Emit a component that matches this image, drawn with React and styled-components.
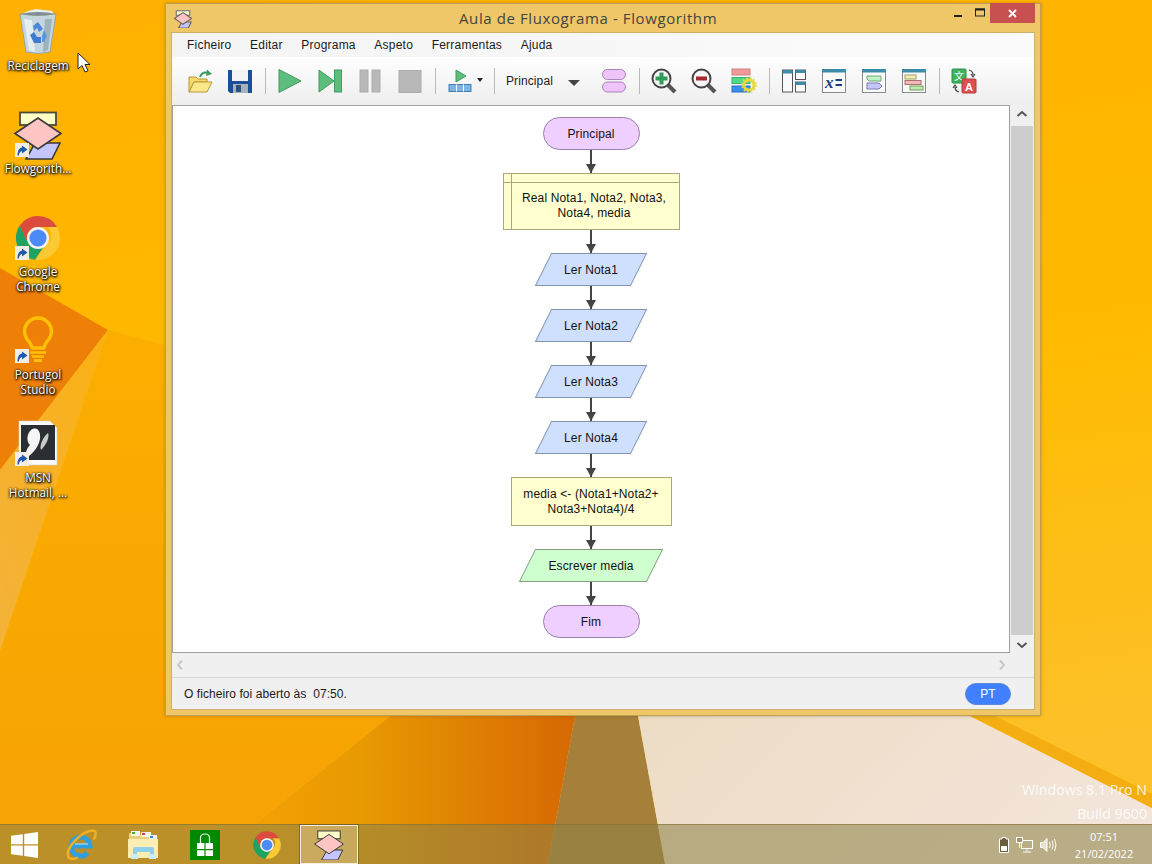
import React from 'react';
import styled, { createGlobalStyle } from 'styled-components';

const GlobalStyle = createGlobalStyle`
  html, body { margin: 0; padding: 0; }
  * { box-sizing: border-box; }
`;

const Screen = styled.div`
  position: relative;
  width: 1152px;
  height: 864px;
  overflow: hidden;
  display: flex;
  flex-direction: column;
  font-family: "Liberation Sans", Arial, sans-serif;
  font-size: 12px;
`;

const WallpaperSvg = styled.svg`
  position: absolute;
  inset: 0;
`;

const Desktop = styled.div`
  position: relative;
  flex: 1;
`;

const IconColumn = styled.div`
  display: flex;
  flex-direction: column;
  width: 76px;
  padding-top: 8px;
`;

const DesktopIcon = styled.div`
  display: flex;
  flex-direction: column;
  align-items: center;
  height: 103px;
`;

const IconBox = styled.div`
  position: relative;
  width: 48px;
  height: 48px;
  svg { display: block; overflow: visible; }
`;

const ShortcutBadge = styled.svg`
  position: absolute;
  left: 1px;
  bottom: 2px;
`;

const IconLabel = styled.div`
  margin-top: 2px;
  width: 76px;
  text-align: center;
  font-family: "Open Sans", sans-serif;
  font-size: 11.7px;
  line-height: 15px;
  color: #fff;
  text-shadow: 0 0 2px #000, 1px 1px 2px #000, 0 1px 3px #000;
  white-space: pre-line;
`;

const Pointer = styled.svg`
  position: absolute;
  left: 77px;
  top: 52px;
`;

const Watermark = styled.div`
  position: absolute;
  right: 5px;
  bottom: -2px;
  text-align: right;
  font-family: "Open Sans", sans-serif;
  font-size: 14.2px;
  line-height: 24px;
  color: rgba(255, 255, 255, 0.88);
`;

const Window = styled.div`
  position: absolute;
  left: 165px;
  top: 3px;
  width: 876px;
  height: 713px;
  display: flex;
  flex-direction: column;
  padding: 0 5px 5px;
  background: #efc768;
  border: 1px solid #c0a050;
  box-shadow: 0 0 3px rgba(90, 60, 0, 0.35);
`;

const TitleBar = styled.div`
  display: flex;
  height: 28px;
  flex: none;
`;

const TitleIcon = styled.svg`
  margin: 6px 0 0 3px;
`;

const TitleText = styled.div`
  margin-left: 267px;
  line-height: 28px;
  font-family: "Open Sans", sans-serif;
  font-size: 15px;
  letter-spacing: 0.6px;
  color: #444;
`;

const WindowButtons = styled.div`
  display: flex;
  margin-left: auto;
  height: 20px;
  margin-top: -1px;
`;

const WindowButton = styled.div`
  display: flex;
  align-items: center;
  justify-content: center;
  width: ${(p) => p.$w}px;
  background: ${(p) => (p.$close ? '#c75050' : 'transparent')};
`;

const Client = styled.div`
  flex: 1;
  display: flex;
  flex-direction: column;
  background: #f0f0f0;
  border: 1px solid #cdb06a;
  min-height: 0;
`;

const MenuBar = styled.div`
  display: flex;
  gap: 18.6px;
  height: 24px;
  flex: none;
  padding-left: 15px;
  background: linear-gradient(90deg, #f4f4f4, #fbfbfb);
  line-height: 24px;
  color: #1a1a1a;
`;

const MenuItem = styled.span`
  letter-spacing: 0.22px;
`;

const Toolbar = styled.div`
  display: flex;
  align-items: center;
  height: 48px;
  flex: none;
  padding-left: 8px;
  background: linear-gradient(#fefefe, #eeeeee);
`;

const ToolButton = styled.div`
  display: flex;
  align-items: center;
  justify-content: center;
  width: 40px;
  height: 30px;
`;

const RunButton = styled.div`
  position: relative;
  width: 49px;
  height: 30px;
  padding: 3px 0 0 8px;
  svg { display: block; }
`;

const RunArrow = styled.span`
  position: absolute;
  left: 37px;
  top: 12px;
  border: 3px solid transparent;
  border-top: 4px solid #222;
`;

const Separator = styled.div`
  width: 1px;
  height: 26px;
  margin: 0 4.5px;
  background: #b9b9b9;
`;

const FunctionCombo = styled.div`
  display: flex;
  align-items: center;
  width: 95px;
  padding-left: 7px;
  letter-spacing: 0.1px;
  color: #222;
`;

const ComboArrow = styled.span`
  margin: 3px 0 0 15px;
  border: 6px solid transparent;
  border-top: 6px solid #444;
  border-bottom: 0;
`;

const Workspace = styled.div`
  flex: none;
  display: grid;
  grid-template-columns: 1fr 24px;
  grid-template-rows: 548px 24px;
`;

const Canvas = styled.div`
  display: flex;
  flex-direction: column;
  align-items: center;
  padding-top: 11px;
  background: #fff;
  border: 1px solid #a0a0a0;
  color: #111;
`;

const VerticalScroll = styled.div`
  display: flex;
  flex-direction: column;
  align-items: center;
  padding: 3px 0 2px;
`;

const ScrollThumb = styled.div`
  width: 22px;
  flex: 1;
  margin: 6px 0 4px;
  background: #cdcdcd;
`;

const HorizontalScroll = styled.div`
  display: flex;
  align-items: center;
  justify-content: space-between;
  padding: 0 26px 0 2px;
  grid-column: 1 / span 2;
`;

const Chevron = styled.svg`
  display: block;
  flex: none;
`;

const StatusBar = styled.div`
  flex: 1;
  display: flex;
  align-items: center;
  justify-content: space-between;
  padding: 0 23px 0 12px;
  border-top: 1px solid #d8d8d8;
  letter-spacing: 0.07px;
  color: #1a1a1a;
  white-space: pre;
`;

const LangBadge = styled.div`
  width: 46px;
  height: 22px;
  border-radius: 11px;
  background: #4080ff;
  border: 1px solid #5f88d8;
  color: #fff;
  text-align: center;
  line-height: 20px;
`;

const Shape = styled.div`
  display: flex;
  align-items: center;
  justify-content: center;
  text-align: center;
  line-height: 15px;
  letter-spacing: 0.13px;
  flex: none;
`;

const Terminal = styled(Shape)`
  width: 97px;
  height: 33px;
  padding-top: 1px;
  border-radius: 17px;
  background: #efcfff;
  border: 1px solid #9a7fa6;
`;

const Declare = styled(Shape)`
  position: relative;
  width: 177px;
  height: 57px;
  padding: 8px 8px 0 14px;
  background: #ffffd0;
  border: 1px solid #a8a878;

  &::before {
    content: '';
    position: absolute;
    left: 0;
    right: 0;
    top: 8px;
    height: 1px;
    background: #a8a878;
  }

  &::after {
    content: '';
    position: absolute;
    left: 7px;
    top: 0;
    bottom: 0;
    width: 1px;
    background: #a8a878;
  }
`;

const Process = styled(Shape)`
  width: 161px;
  height: 49px;
  background: #ffffd0;
  border: 1px solid #a8a878;
`;

const Parallelogram = styled(Shape)`
  position: relative;
  width: ${(p) => p.$w}px;
  height: 33px;
  padding-top: 1px;

  &::before {
    content: '';
    position: absolute;
    inset: 0;
    transform: skewX(-26.5deg);
    background: ${(p) => p.$fill};
    border: 1px solid ${(p) => p.$line};
  }

  span { position: relative; }
`;

const Connector = styled.div`
  position: relative;
  flex: none;
  width: 2px;
  height: 23px;
  background: #444;

  &::after {
    content: '';
    position: absolute;
    left: -4px;
    bottom: 0;
    border-left: 5px solid transparent;
    border-right: 5px solid transparent;
    border-top: 9px solid #444;
  }
`;

const Taskbar = styled.div`
  position: relative;
  display: flex;
  align-items: center;
  height: 40px;
  flex: none;
  background: rgba(140, 130, 72, 0.56);
  border-top: 1px solid rgba(130, 110, 50, 0.6);
`;

const StartButton = styled.div`
  display: flex;
  align-items: center;
  justify-content: center;
  width: 50px;
  height: 100%;
  padding-right: 1px;
`;

const TaskItem = styled.div`
  display: flex;
  align-items: center;
  justify-content: center;
  width: 58px;
  height: 39px;
  margin: 0 2px;
  ${(p) => p.$active && `
    background: rgba(255, 255, 255, 0.25);
    border: 1px solid rgba(255, 255, 255, 0.8);
    box-shadow: 0 0 0 1px rgba(90, 70, 40, 0.5);
  `}
`;

const Tray = styled.div`
  display: flex;
  align-items: center;
  gap: 7px;
  margin-left: auto;
  padding-right: 8px;
`;

const Clock = styled.div`
  width: 80px;
  text-align: center;
  font-family: "Open Sans", sans-serif;
  font-size: 11px;
  line-height: 17px;
  color: #fff;
`;

/* ---- wallpaper ---- */

const Wallpaper = () => (
  <WallpaperSvg width="1152" height="864" viewBox="0 0 1152 864">
    <defs>
      <linearGradient id="base" x1="0" y1="0" x2="0.2" y2="1">
        <stop offset="0" stopColor="#ffb000" />
        <stop offset="0.55" stopColor="#ffbb00" />
        <stop offset="1" stopColor="#fcc028" />
      </linearGradient>
      <linearGradient id="lower" x1="0" y1="0" x2="0" y2="1">
        <stop offset="0" stopColor="#fcae00" />
        <stop offset="1" stopColor="#f6a204" />
      </linearGradient>
      <linearGradient id="ember" x1="0" y1="0" x2="1" y2="0">
        <stop offset="0" stopColor="#f6a404" />
        <stop offset="0.42" stopColor="#e89a02" />
        <stop offset="1" stopColor="#d66804" />
      </linearGradient>
      <linearGradient id="streak" x1="1" y1="0" x2="0" y2="1">
        <stop offset="0" stopColor="#fab012" />
        <stop offset="1" stopColor="#f3b23a" />
      </linearGradient>
      <linearGradient id="cream" x1="0" y1="0" x2="1" y2="0.3">
        <stop offset="0" stopColor="#eddcc4" />
        <stop offset="1" stopColor="#f2e4d8" />
      </linearGradient>
    </defs>
    <rect width="1152" height="864" fill="url(#base)" />
    <polygon points="108,330 165,345 165,716 390,716 205,864 0,864 0,650" fill="url(#lower)" />
    <polygon points="0,268 108,330 0,470" fill="#ee8008" />
    <polygon points="108,330 0,470 0,650" fill="url(#streak)" />
    <polygon points="390,716 575,716 548,864 205,864" fill="url(#ember)" />
    <polygon points="575,716 638,716 665,864 548,864" fill="#a67f3a" />
    <polygon points="638,716 970,716 1152,808 1152,864 665,864" fill="url(#cream)" />
    <polygon points="970,716 995,716 1152,794 1152,808" fill="#f4ae12" />
  </WallpaperSvg>
);

/* ---- desktop & taskbar icons ---- */

const FlowgorithmLogo = ({ size = 48 }) => (
  <svg width={size} height={size} viewBox="0 0 48 48">
    <polygon points="21,32 46,32 38,48 12,48" fill="#c4c4ff" stroke="#3a3a3a" strokeWidth="1.6" />
    <rect x="6" y="1.5" width="36" height="12.5" fill="#ffffc8" stroke="#4a4a3a" strokeWidth="1.8" />
    <polygon points="1,22.5 24,7 47,22.5 24,38" fill="#ffc4c4" stroke="#3a3a3a" strokeWidth="1.6" />
  </svg>
);

const ChromeLogo = ({ size = 48 }) => (
  <svg width={size} height={size} viewBox="0 0 48 48">
    <path d="M43.05 13A22 22 0 0 1 21 45.8L33.5 29.5A11 11 0 0 0 33.5 13z" fill="#fbc934" />
    <path d="M5.8 11.5A22 22 0 0 0 21 45.8L30 32A11 11 0 0 1 14.5 29z" fill="#1ea362" />
    <path d="M24 2A22 22 0 0 1 43.05 13H24A11 11 0 0 0 14 29L5.8 11.5A22 22 0 0 1 24 2z" fill="#dc4c3e" />
    <circle cx="24" cy="24" r="11" fill="#f4f4f4" />
    <circle cx="24" cy="24" r="8.6" fill="#4c8bf5" />
  </svg>
);

const RecycleBin = () => (
  <svg width="48" height="48" viewBox="0 0 48 48">
    <path d="M8 6 L14 3 L22 1 L30 2 L38 3 L40 7 L8 7z" fill="#e6ecee" />
    <path d="M6 6 L12 44 Q24 47 36 44 L42 6 Q24 9 6 6z" fill="#c6d6de" stroke="#8c9aa2" strokeWidth="0.8" />
    <path d="M6 6 Q24 2 42 6 Q24 9 6 6z" fill="#7f8e96" />
    <path d="M10 11 L15 42 L21 44 L18 12z" fill="#eef4f6" opacity="0.8" />
    <path d="M31 11 L29 44 L34 42 L38 11z" fill="#8fa4ae" opacity="0.7" />
    <path d="M19 18 L24 14 L29 21 L25 24 L23 20 L20 23z" fill="#4a88d8" />
    <path d="M16 27 L20 24 L23 29 L27 29 L27 35 L20 35z" fill="#3f7cd0" />
    <path d="M30 22 L33 28 L30 34 L28 34 L28 28z" fill="#5a96e0" />
  </svg>
);

const BulbIcon = () => (
  <svg width="48" height="48" viewBox="0 0 48 48" fill="none">
    <path d="M18 31C18 25 10.5 23 10.5 14.5A13.5 13.5 0 1 1 37.5 14.5C37.5 23 30 25 30 31z" stroke="#fec006" strokeWidth="3.4" strokeLinejoin="round" />
    <path d="M16 35.5H32M18 39.5H30" stroke="#fec006" strokeWidth="2.4" />
    <path d="M20 43.5H28" stroke="#fec006" strokeWidth="3" />
  </svg>
);

const MsnIcon = () => (
  <svg width="48" height="48" viewBox="0 0 48 48">
    <path d="M5 1H36L43 8V45H5z" fill="#fafafa" stroke="#cfcfcf" strokeWidth="0.6" />
    <rect x="7" y="5" width="34" height="35" fill="#2b2f33" />
    <path d="M17 10C23 6 27 11 26 19C25 26 19 33 14 37C10 34 13 28 16 25C12 22 13 13 17 10z" fill="#f5f5f5" />
    <path d="M34 13C36 17 32 25 27 30C25 26 29 17 34 13z" fill="#c9c9c9" />
  </svg>
);

const ShortcutArrow = () => (
  <ShortcutBadge width="14" height="14" viewBox="0 0 14 14">
    <rect width="14" height="14" fill="#f3eee2" />
    <path d="M2.5 12.5C2.5 8 4 5 7 4.5V2.5L12.5 6.5L7 10.5V8C5.5 8.2 4 10 3.8 12.5z" fill="#1f5aa8" />
  </ShortcutBadge>
);

const WindowsLogo = () => (
  <svg width="27" height="26" viewBox="0 0 27 26">
    <path d="M0 3.8L11.8 2.2V12.2H0zM13.2 2L27 0V12.2H13.2zM0 13.6H11.8V23.8L0 22.2zM13.2 13.6H27V26L13.2 24z" fill="#fff" />
  </svg>
);

const IeLogo = () => (
  <svg width="32" height="32" viewBox="0 0 32 32" fill="none">
    <path d="M9 17H25A9.5 9.5 0 1 0 22.5 24" stroke="#2f9fe0" strokeWidth="5" />
    <path d="M10 15H23" stroke="#8ad6f6" strokeWidth="1.5" />
    <path d="M3 27C1 19 16 2 28 1.5C32 2 31 7 28.5 10.5" stroke="#f2b01e" strokeWidth="2.4" />
    <path d="M3 27C4 31 9 30.5 13 28.5" stroke="#f2b01e" strokeWidth="2.4" />
  </svg>
);

const ExplorerIcon = () => (
  <svg width="32" height="32" viewBox="0 0 32 32">
    <path d="M2 4H12L14 6H30V28H2z" fill="#e9cf78" />
    <rect x="4" y="2" width="9" height="5" fill="#f6f6f0" />
    <rect x="5" y="3" width="3" height="2" fill="#3fae48" />
    <rect x="14" y="3" width="10" height="5" fill="#f6f6f0" />
    <rect x="15" y="4" width="3" height="2" fill="#d8463c" />
    <rect x="22" y="6" width="8" height="5" fill="#f6f6f0" />
    <rect x="23" y="7" width="3" height="2" fill="#3a86d8" />
    <path d="M1 10H31V29H1z" fill="#fbeeb0" />
    <path d="M6 30V20Q6 18 8 18H25Q27 18 27 20V30H23V23H10V30z" fill="#8fd0ec" />
    <rect x="4" y="25" width="7" height="5" fill="#c8ecf8" />
    <rect x="22" y="25" width="7" height="5" fill="#c8ecf8" />
  </svg>
);

const StoreIcon = () => (
  <svg width="30" height="30" viewBox="0 0 30 30">
    <rect width="30" height="30" fill="#008a00" />
    <path d="M10.5 13V8Q10.5 4 15 4Q19.5 4 19.5 8V13" fill="none" stroke="#e8f4e8" strokeWidth="1.2" />
    <path d="M7 13H14.4V19H7zM15.6 13H23V19H15.6zM7 20.2H14.4V26H7zM15.6 20.2H23V26H15.6z" fill="#fff" />
  </svg>
);

const BatteryIcon = () => (
  <svg width="10" height="16" viewBox="0 0 10 16" fill="none">
    <path d="M3 .5H7V2H9.5V15.5H.5V2H3z" fill="#6a5c3c" stroke="#fff" />
    <rect x="2" y="9" width="6" height="5" fill="#fff" />
  </svg>
);

const NetworkIcon = () => (
  <svg width="17" height="16" viewBox="0 0 17 16" fill="none" stroke="#fff">
    <rect x="5.5" y="3.5" width="11" height="8" />
    <rect x="0.5" y="0.5" width="6" height="5" fill="#a8946c" />
    <path d="M3.5 5.5V11M11 11.5V14M7 15H15" />
  </svg>
);

const VolumeIcon = () => (
  <svg width="17" height="16" viewBox="0 0 17 16" fill="none" stroke="#fff">
    <path d="M.5 5.5H3L7 1.5V14.5L3 10.5H.5z" fill="#e8e0d0" />
    <path d="M9.5 5Q11 8 9.5 11M12 3.5Q14.5 8 12 12.5M14.5 2Q17.5 8 14.5 14" />
  </svg>
);

/* ---- toolbar icons ---- */

const Tb = ({ children }) => (
  <svg width="26" height="26" viewBox="0 0 26 26">{children}</svg>
);

const OpenIcon = () => (
  <Tb>
    <path d="M2 24V9H9L11 11H20V14H7L2 24z" fill="#f7d868" stroke="#b8963a" />
    <path d="M2 24L7 14H25L20 24z" fill="#fbe88a" stroke="#b8963a" />
    <path d="M13 9Q15 3 22 5" fill="none" stroke="#3e9e60" strokeWidth="2" />
    <path d="M20 1.5L25 6L19 8z" fill="#3e9e60" />
  </Tb>
);

const SaveIcon = () => (
  <Tb>
    <path d="M1 2H25V25H3L1 23z" fill="#1b4f9c" />
    <rect x="5" y="2" width="16" height="11" fill="#f4f4f4" />
    <rect x="6" y="16" width="15" height="9" fill="#a8b0b8" />
    <rect x="9" y="17" width="5" height="7" fill="#2a4f80" />
  </Tb>
);

const PlayIcon = () => (
  <Tb>
    <polygon points="2,1.5 24,13 2,24.5" fill="#5dbd7d" stroke="#3f9d60" />
  </Tb>
);

const StepIcon = () => (
  <Tb>
    <polygon points="2,2 17,13 2,24" fill="#5dbd7d" stroke="#3f9d60" />
    <rect x="17.5" y="2" width="7" height="22" fill="#5dbd7d" stroke="#3f9d60" />
  </Tb>
);

const PauseIcon = () => (
  <Tb>
    <rect x="3" y="2" width="8" height="22" fill="#b8b8b8" stroke="#acacac" />
    <rect x="15" y="2" width="8" height="22" fill="#b8b8b8" stroke="#acacac" />
  </Tb>
);

const StopIcon = () => (
  <Tb>
    <rect x="2" y="2.5" width="22" height="22" fill="#b8b8b8" stroke="#acacac" />
  </Tb>
);

const RunModeIcon = () => (
  <svg width="24" height="24" viewBox="0 0 24 24">
    <polygon points="8,1 18,7 8,13" fill="#5dbd7d" stroke="#3f9d60" />
    <rect x="1" y="15.5" width="22" height="7" fill="#7ab4ea" stroke="#4a7ea8" />
    <path d="M8.5 15.5V22.5M15.5 15.5V22.5" stroke="#fff" />
  </svg>
);

const FunctionsIcon = () => (
  <Tb>
    <rect x="1.5" y="1.5" width="23" height="10" rx="5" fill="#efc4fb" stroke="#a884b8" />
    <rect x="1.5" y="14" width="23" height="10" rx="5" fill="#efc4fb" stroke="#a884b8" />
  </Tb>
);

const ZoomIcon = ({ minus }) => (
  <Tb>
    <path d="M17 17L24 24" stroke="#555" strokeWidth="4" />
    <circle cx="10.5" cy="10.5" r="9" fill="#f6f6f6" stroke="#444" strokeWidth="2" />
    {minus
      ? <rect x="5" y="8.5" width="11" height="4" fill="#a8262c" />
      : <path d="M8.5 4.5H12.5V8.5H16.5V12.5H12.5V16.5H8.5V12.5H4.5V8.5H8.5z" fill="#2f9c58" />}
  </Tb>
);

const StyleIcon = () => (
  <Tb>
    <rect x="1" y="1" width="18" height="6" fill="#ee9a9a" stroke="#d08080" />
    <rect x="1" y="9.5" width="18" height="6" fill="#4fdc8a" stroke="#38b06a" />
    <rect x="1" y="18" width="18" height="6" fill="#3a90e8" stroke="#2a70c0" />
    <circle cx="18" cy="17" r="5" fill="none" stroke="#e8d83c" strokeWidth="3" />
    <circle cx="18" cy="17" r="7" fill="none" stroke="#e8d83c" strokeWidth="1.6" strokeDasharray="2 1.7" />
  </Tb>
);

const LayoutIcon = () => (
  <Tb>
    <rect x="1.5" y="2" width="10" height="22" fill="#fafafa" stroke="#555" />
    <rect x="1.5" y="2" width="10" height="3.5" fill="#3d8ca8" />
    <rect x="14.5" y="2" width="10" height="9.5" fill="#fafafa" stroke="#555" />
    <rect x="14.5" y="2" width="10" height="3" fill="#3d8ca8" />
    <rect x="14.5" y="14" width="10" height="10" fill="#fafafa" stroke="#555" />
    <rect x="14.5" y="14" width="10" height="3" fill="#3d8ca8" />
  </Tb>
);

const ConsoleFrame = ({ children }) => (
  <Tb>
    <rect x="1.5" y="1.5" width="23" height="23" fill="#fafafa" stroke="#8a8a8a" />
    <rect x="1" y="1" width="24" height="3.5" fill="#3d8ca8" />
    {children}
  </Tb>
);

const VariablesIcon = () => (
  <ConsoleFrame>
    <text x="4" y="20" fontFamily="Liberation Serif, serif" fontStyle="italic" fontWeight="700" fontSize="17" fill="#1c3f86">x</text>
    <path d="M14.5 12H21M14.5 17H21" stroke="#1c3f86" strokeWidth="2" />
  </ConsoleFrame>
);

const ChatIcon = () => (
  <ConsoleFrame>
    <path d="M6 8H20V13H8L6 11z" fill="#bff2c4" stroke="#78a87c" />
    <path d="M6 15H18L21 18L18 21H6z" fill="#c6c6f8" stroke="#7c7cb0" />
  </ConsoleFrame>
);

const GanttIcon = () => (
  <ConsoleFrame>
    <rect x="4" y="7" width="11" height="4" fill="#f4f0b0" stroke="#a0a070" />
    <rect x="4" y="12.5" width="16" height="4" fill="#f4b8b8" stroke="#a87070" />
    <rect x="9" y="18" width="13" height="4" fill="#bfe8b0" stroke="#70a060" />
  </ConsoleFrame>
);

const TranslateIcon = () => (
  <Tb>
    <rect x="1" y="1" width="14" height="14" rx="1" fill="#3cb45c" stroke="#2a9046" />
    <text x="8" y="12" textAnchor="middle" fontSize="10" fontFamily="Noto Sans CJK SC, sans-serif" fill="#fff">文</text>
    <rect x="11" y="11" width="14" height="14" rx="1" fill="#dc5050" stroke="#b83a3a" />
    <text x="18" y="22.5" textAnchor="middle" fontSize="11" fontWeight="700" fontFamily="Liberation Sans, sans-serif" fill="#fff">A</text>
    <path d="M18 2Q22 3 22 7M20 6L22 9L24 6M8 24Q4 23 4 19M2 20L4 17L6 20" fill="none" stroke="#444" strokeWidth="1.2" />
  </Tb>
);

const ScrollChevron = ({ dir, color }) => {
  const paths = {
    up: 'M1.5 8L6 4L10.5 8',
    down: 'M1.5 4L6 8L10.5 4',
    left: 'M8 1.5L4 6L8 10.5',
    right: 'M4 1.5L8 6L4 10.5',
  };
  return (
    <Chevron width="12" height="12" viewBox="0 0 12 12">
      <path d={paths[dir]} fill="none" stroke={color} strokeWidth="2" />
    </Chevron>
  );
};

const Icons = [
  { label: 'Reciclagem', icon: <RecycleBin /> },
  { label: 'Flowgorith...', icon: <FlowgorithmLogo />, shortcut: true },
  { label: 'Google\nChrome', icon: <ChromeLogo />, shortcut: true },
  { label: 'Portugol\nStudio', icon: <BulbIcon />, shortcut: true },
  { label: 'MSN\nHotmail, ...', icon: <MsnIcon />, shortcut: true },
];

const menus = ['Ficheiro', 'Editar', 'Programa', 'Aspeto', 'Ferramentas', 'Ajuda'];
const inputs = ['Ler Nota1', 'Ler Nota2', 'Ler Nota3', 'Ler Nota4'];

const App = () => (
  <Screen>
    <GlobalStyle />
    <Wallpaper />
    <Desktop>
      <IconColumn>
        {Icons.map((item) => (
          <DesktopIcon key={item.label}>
            <IconBox>
              {item.icon}
              {item.shortcut && <ShortcutArrow />}
            </IconBox>
            <IconLabel>{item.label}</IconLabel>
          </DesktopIcon>
        ))}
      </IconColumn>

      <Pointer width="14" height="22" viewBox="0 0 14 22">
        <path d="M1 1V17L5 13.5L8 20L11 18.8L8 12.5H13z" fill="#fff" stroke="#222" />
      </Pointer>

      <Watermark>
        Windows 8.1 Pro N
        <br />
        Build 9600
      </Watermark>

      <Window>
        <TitleBar>
          <TitleIcon width="18" height="18" viewBox="0 0 48 48">
            <polygon points="21,32 46,32 38,48 12,48" fill="#c4c4ff" stroke="#666" strokeWidth="3" />
            <rect x="6" y="2" width="36" height="12" fill="#ffffc8" stroke="#777" strokeWidth="3" />
            <polygon points="1,22.5 24,7 47,22.5 24,38" fill="#ffc4c4" stroke="#666" strokeWidth="3" />
          </TitleIcon>
          <TitleText>Aula de Fluxograma - Flowgorithm</TitleText>
          <WindowButtons>
            <WindowButton $w={26}>
              <svg width="10" height="10" viewBox="0 0 10 10"><rect x="1" y="7" width="8" height="2" fill="#222" /></svg>
            </WindowButton>
            <WindowButton $w={19}>
              <svg width="11" height="10" viewBox="0 0 11 10"><rect x="0.5" y="1" width="9" height="7" fill="none" stroke="#222" /><rect x="0" y="0.5" width="10" height="2" fill="#222" /></svg>
            </WindowButton>
            <WindowButton $w={45} $close>
              <svg width="11" height="11" viewBox="0 0 11 11"><path d="M2 2L9 9M9 2L2 9" stroke="#fff" strokeWidth="1.8" /></svg>
            </WindowButton>
          </WindowButtons>
        </TitleBar>

        <Client>
          <MenuBar>
            {menus.map((m) => <MenuItem key={m}>{m}</MenuItem>)}
          </MenuBar>

          <Toolbar>
            <ToolButton><OpenIcon /></ToolButton>
            <ToolButton><SaveIcon /></ToolButton>
            <Separator />
            <ToolButton><PlayIcon /></ToolButton>
            <ToolButton><StepIcon /></ToolButton>
            <ToolButton><PauseIcon /></ToolButton>
            <ToolButton><StopIcon /></ToolButton>
            <Separator />
            <RunButton><RunModeIcon /><RunArrow /></RunButton>
            <Separator />
            <FunctionCombo>Principal<ComboArrow /></FunctionCombo>
            <ToolButton><FunctionsIcon /></ToolButton>
            <Separator />
            <ToolButton><ZoomIcon /></ToolButton>
            <ToolButton><ZoomIcon minus /></ToolButton>
            <ToolButton><StyleIcon /></ToolButton>
            <Separator />
            <ToolButton><LayoutIcon /></ToolButton>
            <ToolButton><VariablesIcon /></ToolButton>
            <ToolButton><ChatIcon /></ToolButton>
            <ToolButton><GanttIcon /></ToolButton>
            <Separator />
            <ToolButton><TranslateIcon /></ToolButton>
          </Toolbar>

          <Workspace>
            <Canvas>
              <Terminal>Principal</Terminal>
              <Connector />
              <Declare>Real Nota1, Nota2, Nota3, Nota4, media</Declare>
              <Connector />
              {inputs.map((text) => (
                <React.Fragment key={text}>
                  <Parallelogram $w={96} $fill="#cfe0ff" $line="#8294ad"><span>{text}</span></Parallelogram>
                  <Connector />
                </React.Fragment>
              ))}
              <Process>media &lt;- (Nota1+Nota2+<br />Nota3+Nota4)/4</Process>
              <Connector />
              <Parallelogram $w={128} $fill="#cfffcf" $line="#84a084"><span>Escrever media</span></Parallelogram>
              <Connector />
              <Terminal>Fim</Terminal>
            </Canvas>
            <VerticalScroll>
              <ScrollChevron dir="up" color="#555" />
              <ScrollThumb />
              <ScrollChevron dir="down" color="#555" />
            </VerticalScroll>
            <HorizontalScroll>
              <ScrollChevron dir="left" color="#c8c8c8" />
              <ScrollChevron dir="right" color="#c8c8c8" />
            </HorizontalScroll>
          </Workspace>

          <StatusBar>
            <span>O ficheiro foi aberto às  07:50.</span>
            <LangBadge>PT</LangBadge>
          </StatusBar>
        </Client>
      </Window>
    </Desktop>

    <Taskbar>
      <StartButton><WindowsLogo /></StartButton>
      <TaskItem><IeLogo /></TaskItem>
      <TaskItem><ExplorerIcon /></TaskItem>
      <TaskItem><StoreIcon /></TaskItem>
      <TaskItem><ChromeLogo size={30} /></TaskItem>
      <TaskItem $active><FlowgorithmLogo size={30} /></TaskItem>
      <Tray>
        <BatteryIcon />
        <NetworkIcon />
        <VolumeIcon />
        <Clock>07:51<br />21/02/2022</Clock>
      </Tray>
    </Taskbar>
  </Screen>
);

export default App;
